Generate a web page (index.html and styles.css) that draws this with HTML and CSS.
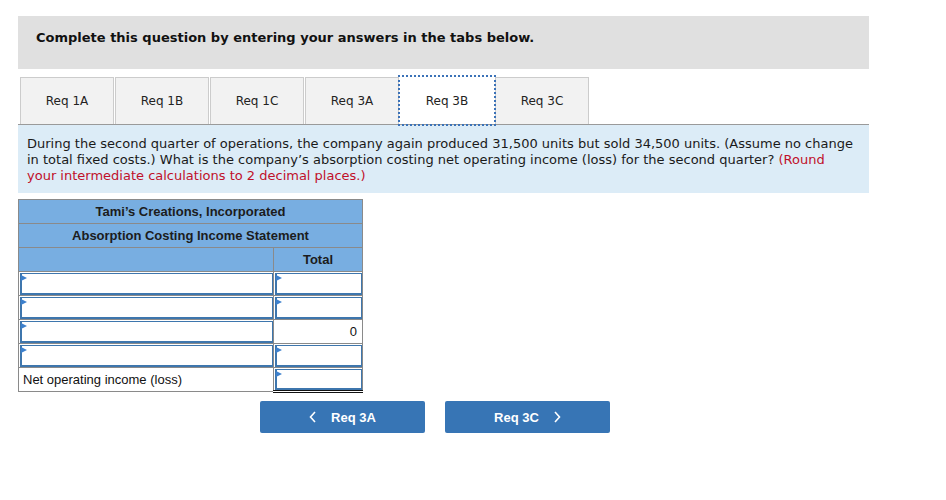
FILE: index.html
```html
<!DOCTYPE html>
<html lang="en">

<head>
    <meta charset="UTF-8">
    <meta name="viewport" content="width=device-width, initial-scale=1.0">
    <title>Req 3B</title>
    <link rel="stylesheet" href="styles.css">
</head>

<body>

    <main class="page">
        <div class="prompt">Complete this question by entering your answers in the tabs below.</div>

        <ul class="tabs">
            <li class="tab">Req 1A</li>
            <li class="tab">Req 1B</li>
            <li class="tab">Req 1C</li>
            <li class="tab">Req 3A</li>
            <li class="tab active">Req 3B</li>
            <li class="tab">Req 3C</li>
        </ul>

        <div class="question">
            During the second quarter of operations, the company again produced 31,500 units but sold 34,500 units. (Assume no change in total fixed costs.) What is the company’s absorption costing net operating income (loss) for the second quarter? <span class="hint">(Round your intermediate calculations to 2 decimal places.)</span>
        </div>

        <table class="statement">
            <colgroup>
                <col class="label-col">
                <col class="total-col">
            </colgroup>
            <tr>
                <th colspan="2">Tami’s Creations, Incorporated</th>
            </tr>
            <tr>
                <th colspan="2">Absorption Costing Income Statement</th>
            </tr>
            <tr>
                <th></th>
                <th>Total</th>
            </tr>
            <tr>
                <td><div class="field"></div></td>
                <td><div class="field"></div></td>
            </tr>
            <tr>
                <td><div class="field"></div></td>
                <td><div class="field"></div></td>
            </tr>
            <tr>
                <td><div class="field"></div></td>
                <td class="amount subtotal">0</td>
            </tr>
            <tr>
                <td><div class="field"></div></td>
                <td><div class="field"></div></td>
            </tr>
            <tr>
                <td class="label">Net operating income (loss)</td>
                <td class="final"><div class="field"></div></td>
            </tr>
        </table>

        <div class="nav">
            <button class="nav-btn">
                <svg width="8" height="12" viewBox="0 0 8 12"><polyline points="6,1 1.5,6 6,11" fill="none" stroke="#fff" stroke-width="1.6"/></svg>
                <span>Req 3A</span>
            </button>
            <button class="nav-btn">
                <span>Req 3C</span>
                <svg width="8" height="12" viewBox="0 0 8 12"><polyline points="2,1 6.5,6 2,11" fill="none" stroke="#fff" stroke-width="1.6"/></svg>
            </button>
        </div>
    </main>

</body>

</html>
```

FILE: styles.css
```css
* {
    box-sizing: border-box;
    margin: 0;
    padding: 0;
}

body {
    background: #fff;
    font-family: "DejaVu Sans", Verdana, sans-serif;
    color: #111;
}

.page {
    width: 851px;
    margin: 16px 0 0 18px;
}

.prompt {
    background-color: #e0e0e0;
    height: 53px;
    padding: 14px 18px 0;
    font-size: 13px;
    font-weight: bold;
    line-height: 16px;
}

.tabs {
    list-style: none;
    display: flex;
    gap: 1px;
    margin: 8px 0 0 2px;
}

.tab {
    width: 94px;
    height: 47px;
    display: flex;
    align-items: center;
    justify-content: center;
    background-color: #f2f2f2;
    border: 1px solid #cccccc;
    border-bottom: none;
    font-size: 12px;
    color: #222;
}

.tab.active {
    background-color: #fff;
    border-color: transparent;
    outline: 2px dotted #3b72b8;
    position: relative;
    z-index: 1;
}

.question {
    background-color: #dcecf7;
    border-top: 1px solid #9a9a9a;
    padding: 11px 14px 9px 9px;
    font-size: 13px;
    line-height: 16px;
    color: #1a1a1a;
}

.question .hint {
    color: #c0102a;
}

.statement {
    margin-top: 6px;
    width: 344px;
    table-layout: fixed;
    border-collapse: collapse;
    font-family: "Liberation Sans", Arial, sans-serif;
    font-size: 13px;
    color: #111;
}

.label-col {
    width: 255px;
}

.total-col {
    width: 89px;
}

.statement th,
.statement td {
    border: 1px solid #8a8a8a;
    height: 24px;
    padding: 0;
}

.statement th {
    background-color: #78aee1;
    font-weight: bold;
    text-align: center;
    color: #1c1c1c;
}

.statement td {
    background-color: #fff;
}

.statement .label {
    padding-left: 4px;
}

.statement .amount {
    text-align: right;
    padding-right: 5px;
}

.statement .subtotal {
    border-top: 1px solid #111;
}

.statement .final {
    border-top: 1px solid #111;
    border-bottom: 3px double #111;
    height: 23px;
}

.field {
    position: relative;
    height: 22px;
    margin: 0 0 0 1px;
    background: #fff;
    border: 1px solid #3e76ad;
    border-left-width: 2px;
    border-bottom-width: 2px;
}

.final .field {
    height: 21px;
}

.field::before {
    content: "";
    position: absolute;
    left: -1px;
    top: 1px;
    border-left: 6px solid #3d80cc;
    border-top: 3px solid transparent;
    border-bottom: 3px solid transparent;
}

.nav {
    display: flex;
    gap: 20px;
    margin: 8px 0 0 242px;
}

.nav-btn {
    width: 165px;
    height: 32px;
    display: flex;
    align-items: center;
    justify-content: center;
    gap: 14px;
    background-color: #3775b5;
    border: none;
    border-radius: 2px;
    color: #fff;
    font-family: "Liberation Sans", Arial, sans-serif;
    font-size: 13px;
    font-weight: bold;
}
```
